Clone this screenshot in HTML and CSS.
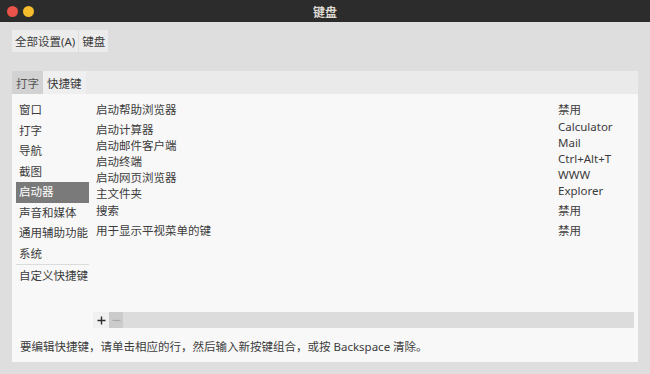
FILE: index.html
```html
<!DOCTYPE html>
<html>
<head>
    <meta charset="utf-8">
    <link rel="stylesheet" href="styles.css">
</head>
<body>
    <div class="titlebar">
        <div class="dots">
            <span class="dot red"></span>
            <span class="dot yellow"></span>
        </div>
        <div class="title">键盘</div>
        <div></div>
    </div>

    <div class="crumbs">
        <button class="crumb">全部设置(A)</button>
        <button class="crumb">键盘</button>
    </div>

    <div class="notebook">
        <div class="tabs">
            <div class="tab">打字</div>
            <div class="tab active">快捷键</div>
        </div>

        <div class="page">
            <div class="main">
                <ul class="sections">
                    <li>窗口</li>
                    <li>打字</li>
                    <li>导航</li>
                    <li>截图</li>
                    <li class="selected">启动器</li>
                    <li>声音和媒体</li>
                    <li>通用辅助功能</li>
                    <li>系统</li>
                    <li class="sep"></li>
                    <li class="custom">自定义快捷键</li>
                </ul>

                <div class="shortcuts">
                    <div class="row h17"><span class="action">启动帮助浏览器</span><span class="accel">禁用</span></div>
                    <div class="row shift"><span class="action">启动计算器</span><span class="accel">Calculator</span></div>
                    <div class="row shift"><span class="action">启动邮件客户端</span><span class="accel">Mail</span></div>
                    <div class="row shift"><span class="action">启动终端</span><span class="accel">Ctrl+Alt+T</span></div>
                    <div class="row shift"><span class="action">启动网页浏览器</span><span class="accel">WWW</span></div>
                    <div class="row shift h20"><span class="action">主文件夹</span><span class="accel">Explorer</span></div>
                    <div class="row h20"><span class="action">搜索</span><span class="accel">禁用</span></div>
                    <div class="row"><span class="action">用于显示平视菜单的键</span><span class="accel">禁用</span></div>
                </div>
            </div>

            <div class="toolbar">
                <button class="tool add">
                    <svg width="9" height="9" viewBox="0 0 9 9"><path d="M4.5 0.5v8M0.5 4.5h8" stroke="#2e2e2e" stroke-width="1.4"/></svg>
                </button>
                <button class="tool remove">
                    <svg width="9" height="9" viewBox="0 0 9 9"><path d="M0.5 4.5h8" stroke="#a9a9a9" stroke-width="1.2"/></svg>
                </button>
            </div>

            <p class="hint">要编辑快捷键，请单击相应的行，然后输入新按键组合，或按 Backspace 清除。</p>
        </div>
    </div>
</body>
</html>
```

FILE: styles.css
```css
body {
    margin: 0;
    width: 650px;
    height: 374px;
    background-color: #dedede;
    font-family: "Noto Sans", "Noto Sans CJK SC", sans-serif;
    font-size: 11.5px;
    color: #3c3c3c;
    overflow: hidden;
}

.titlebar {
    height: 22px;
    background-color: #2c2c2c;
    display: grid;
    grid-template-columns: 1fr auto 1fr;
    align-items: center;
}

.dots {
    display: flex;
    gap: 5px;
    padding-left: 7px;
}

.dot {
    width: 11px;
    height: 11px;
    border-radius: 50%;
}

.red {
    background-color: #e9534a;
}

.yellow {
    background-color: #f5bd2c;
}

.title {
    color: #dfdbd2;
    font-weight: bold;
    font-size: 12px;
    font-family: "Noto Sans CJK SC", sans-serif;
}

.crumbs {
    display: flex;
    gap: 1px;
    padding: 8px 12px 0;
}

.crumb {
    font: inherit;
    color: #3c3c3c;
    height: 22px;
    padding: 0 3px;
    border: none;
    background-color: #ececec;
}

.notebook {
    margin: 19px 0 0 12px;
    width: 626px;
}

.tabs {
    display: flex;
    height: 23px;
    background-color: #eaeaea;
}

.tab {
    display: flex;
    align-items: center;
    padding: 0 4px;
    background-color: #d2d2d2;
    color: #555;
}

.tab.active {
    background-color: #efefef;
    color: #3c3c3c;
}

.page {
    height: 268px;
    background-color: #f8f8f8;
    display: flex;
    flex-direction: column;
}

.main {
    height: 218px;
    display: flex;
}

.sections {
    list-style: none;
    margin: 0;
    padding: 6px 3px 0 4px;
    width: 73px;
}

.sections li {
    height: 20.5px;
    line-height: 20.5px;
    padding-left: 3px;
}

.sections li.selected {
    background-color: #7a7a7a;
    color: #fff;
}

.sections li.sep {
    height: 1px;
    background-color: #dcdcdc;
    padding: 0;
}

.sections li.custom {
    margin-top: 1px;
}

.shortcuts {
    flex: 1;
    padding: 8px 4px 0 4px;
}

.row {
    display: flex;
    height: 16px;
    line-height: 16px;
}

.row.h17 {
    height: 17px;
}

.row.h20 {
    height: 20px;
}

.action {
    width: 462px;
}

.row.shift .action {
    padding-top: 3px;
}

.toolbar {
    display: flex;
    height: 16px;
    margin-left: 81px;
    width: 541px;
    background-color: #dcdcdc;
}

.tool {
    border: none;
    padding: 0;
    display: flex;
    align-items: center;
    justify-content: center;
}

.add {
    width: 16px;
    background-color: #f1f1f1;
}

.remove {
    width: 14px;
    background-color: #cbcbcb;
}

.hint {
    margin: 11px 0 0;
    padding-left: 8px;
    line-height: 16px;
}
```
